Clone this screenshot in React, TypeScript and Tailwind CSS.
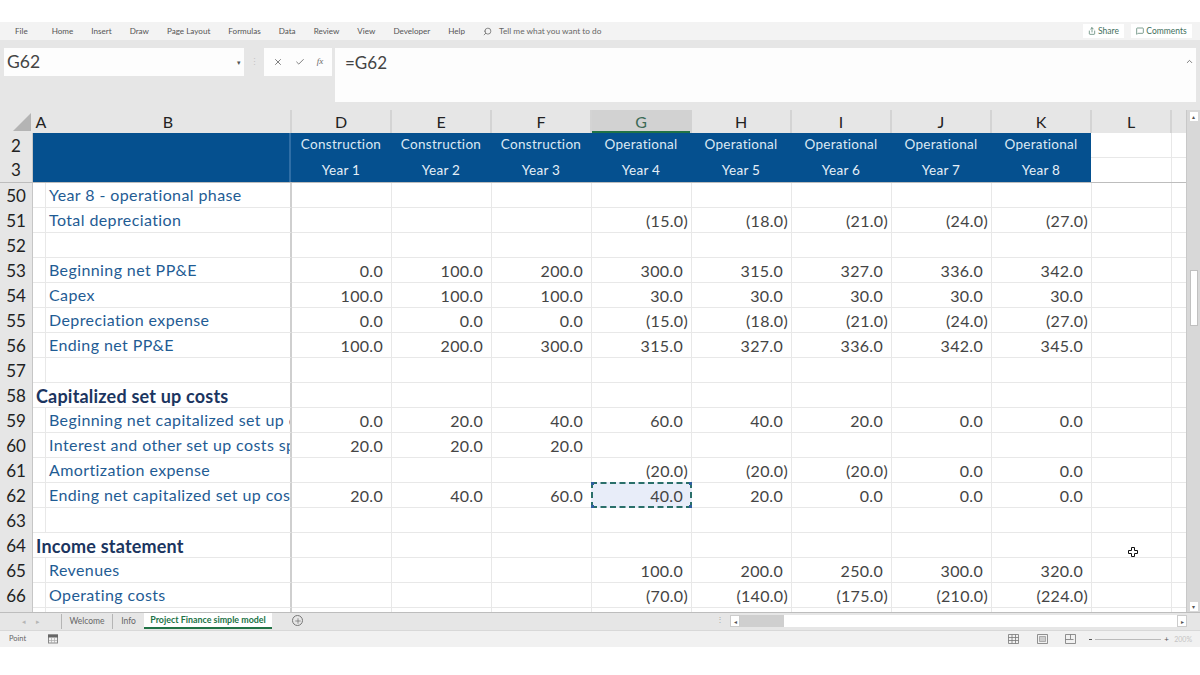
import React from "react";
import { Search, X, Check, MessageSquare, Share, ChevronUp, Plus } from "lucide-react";

type Row = { n: number; label?: string; head?: boolean; v?: string[] };

const e = "";
const rows: Row[] = [
  { n: 50, label: "Year 8 - operational phase" },
  { n: 51, label: "Total depreciation", v: [e, e, e, "(15.0)", "(18.0)", "(21.0)", "(24.0)", "(27.0)"] },
  { n: 52 },
  { n: 53, label: "Beginning net PP&E", v: ["0.0", "100.0", "200.0", "300.0", "315.0", "327.0", "336.0", "342.0"] },
  { n: 54, label: "Capex", v: ["100.0", "100.0", "100.0", "30.0", "30.0", "30.0", "30.0", "30.0"] },
  { n: 55, label: "Depreciation expense", v: ["0.0", "0.0", "0.0", "(15.0)", "(18.0)", "(21.0)", "(24.0)", "(27.0)"] },
  { n: 56, label: "Ending net PP&E", v: ["100.0", "200.0", "300.0", "315.0", "327.0", "336.0", "342.0", "345.0"] },
  { n: 57 },
  { n: 58, label: "Capitalized set up costs", head: true },
  { n: 59, label: "Beginning net capitalized set up costs", v: ["0.0", "20.0", "40.0", "60.0", "40.0", "20.0", "0.0", "0.0"] },
  { n: 60, label: "Interest and other set up costs spent", v: ["20.0", "20.0", "20.0", e, e, e, e, e] },
  { n: 61, label: "Amortization expense", v: [e, e, e, "(20.0)", "(20.0)", "(20.0)", "0.0", "0.0"] },
  { n: 62, label: "Ending net capitalized set up costs", v: ["20.0", "40.0", "60.0", "40.0", "20.0", "0.0", "0.0", "0.0"] },
  { n: 63 },
  { n: 64, label: "Income statement", head: true },
  { n: 65, label: "Revenues", v: [e, e, e, "100.0", "200.0", "250.0", "300.0", "320.0"] },
  { n: 66, label: "Operating costs", v: [e, e, e, "(70.0)", "(140.0)", "(175.0)", "(210.0)", "(224.0)"] },
];

const cols = ["D", "E", "F", "G", "H", "I", "J", "K"];
const line1 = ["Construction", "Construction", "Construction", "Operational", "Operational", "Operational", "Operational", "Operational"];

function ColHead({ t, w, active }: { t: string; w: string; active?: boolean }) {
  return (
    <div className={`${w} h-full flex items-center justify-center border-r-2 ${active ? "bg-[#d2d2d2] border-[#d2d2d2] text-[#3d6b57] shadow-[inset_0_-2px_0_#217346]" : "border-[#d4d4d4] text-[#222]"}`}>
      {t}
    </div>
  );
}

function RowNum({ t, h = "h-[25px]" }: { t?: number; h?: string }) {
  return (
    <div className={`w-[33px] ${h} shrink-0 bg-[#e6e6e6] border-r border-[#c6c6c6] flex items-center justify-center text-[#222] text-[17px]`}>
      {t}
    </div>
  );
}

function Cell({ value, sel }: { value: string; sel?: boolean }) {
  const paren = value.startsWith("(");
  if (sel) {
    return (
      <div className="w-[101px] h-[26px] -mt-px -ml-px shrink-0 relative flex items-center justify-end pr-[7px] pt-[2px] tracking-[0.3px] bg-[#e8edf9] border-2 border-dashed border-[#2a6f6a] text-[#444]">
        {value}
        <span className="absolute -left-[2px] -top-[2px] w-[3px] h-[3px] bg-[#2f5f9f]" />
        <span className="absolute -right-[2px] -top-[2px] w-[3px] h-[3px] bg-[#2f5f9f]" />
        <span className="absolute -left-[2px] -bottom-[2px] w-[3px] h-[3px] bg-[#2f5f9f]" />
        <span className="absolute -right-[2px] -bottom-[2px] w-[3px] h-[3px] bg-[#2f5f9f]" />
      </div>
    );
  }
  return (
    <div className={`w-[100px] h-[25px] shrink-0 flex items-center justify-end border-r border-b border-[#e8e8e8] text-[#444] pt-px tracking-[0.3px] ${paren ? "pr-[3px]" : "pr-[8px]"}`}>
      {value}
    </div>
  );
}

function Tail() {
  return (
    <>
      <div className="w-[80px] h-[25px] shrink-0 border-r border-b border-[#e8e8e8]" />
      <div className="w-[14px] h-[25px] shrink-0 border-b border-[#e8e8e8]" />
    </>
  );
}

function DataRow({ r }: { r: Row }) {
  return (
    <div className="flex h-[25px]">
      <RowNum t={r.n} />
      {r.head ? (
        <div className="w-[259px] h-[25px] shrink-0 pl-[3px] pt-[2px] flex items-center border-r-2 border-b border-r-[#cfcfcf] border-b-[#e8e8e8] font-bold text-[#1b3560] text-[18px] tracking-[0.2px] whitespace-nowrap">
          {r.label}
        </div>
      ) : (
        <>
          <div className="w-[13px] h-[25px] shrink-0 border-r border-b border-[#e8e8e8]" />
          <div className="w-[246px] h-[25px] shrink-0 pl-[3px] flex items-center border-r-2 border-b border-r-[#cfcfcf] border-b-[#e8e8e8] text-[#1f5c94] tracking-[0.4px] whitespace-nowrap overflow-hidden">
            {r.label}
          </div>
        </>
      )}
      {cols.map((c, i) => (
        <Cell key={c} value={r.v ? r.v[i] : ""} sel={r.n === 62 && c === "G"} />
      ))}
      <Tail />
    </div>
  );
}

const tabs = ["File", "Home", "Insert", "Draw", "Page Layout", "Formulas", "Data", "Review", "View", "Developer", "Help"];

export default function App() {
  return (
    <div className="relative w-[1200px] h-[675px] bg-white flex flex-col overflow-hidden text-[16px] font-['Lato','Liberation_Sans',sans-serif]">
      <div className="h-[22px] shrink-0 bg-white" />

      {/* ribbon tabs */}
      <div className="h-[18px] shrink-0 bg-[#f3f3f3] flex items-center pl-[15px] text-[8.1px] text-[#555] relative">
        <div className="flex gap-[18px]">
          {tabs.map((t, i) => (
            <span key={t} className={i === 0 ? "mr-[6px]" : ""}>{t}</span>
          ))}
        </div>
        <Search size={9} className="ml-[18px] text-[#666] -scale-x-100" />
        <span className="ml-[7px] text-[#666] text-[8.3px]">Tell me what you want to do</span>
        <div className="ml-auto flex gap-[7px] pr-[8px] text-[#3f6f5c] text-[8.5px]">
          <div className="w-[41px] h-[14px] bg-white flex items-center justify-center gap-[2px]">
            <Share size={8} />
            <span>Share</span>
          </div>
          <div className="w-[61px] h-[14px] bg-white flex items-center justify-center gap-[2px]">
            <MessageSquare size={8} />
            <span>Comments</span>
          </div>
        </div>
      </div>

      {/* formula area */}
      <div className="h-[70px] shrink-0 bg-[#e6e6e6] flex items-start pt-[8px] pl-[4px] pr-[4px]">
        <div className="w-[240px] h-[28px] bg-[#fdfdfd] flex items-center pl-[3px] pr-[3px] text-[17.5px] text-[#444]">
          <span>G62</span>
          <span className="ml-auto text-[7px] text-[#555]">▾</span>
        </div>
        <div className="w-[20px] h-[28px] flex items-center justify-center text-[#c4c4c4] text-[9px]">⋮</div>
        <div className="w-[68px] h-[28px] bg-[#fdfdfd] flex items-center justify-center gap-[12px] text-[#666]">
          <X size={10} />
          <Check size={10} />
          <span className="text-[9px] italic font-['Liberation_Serif',serif]">fx</span>
        </div>
        <div className="w-[3px]" />
        <div className="w-[861px] h-[54px] bg-[#fdfdfd] flex items-start pl-[10px] pt-[2px] pr-[2px] text-[17px] text-[#444] relative">
          <span>=G62</span>
          <ChevronUp size={9} className="ml-auto mt-[7px] text-[#555]" />
        </div>
      </div>

      {/* sheet */}
      <div className="h-[502px] shrink-0 flex bg-[#e6e6e6]">
        <div className="w-[1186px] shrink-0 overflow-hidden bg-white">
          <div className="flex h-[23px] bg-[#e6e6e6] text-[16px]">
            <div className="w-[33px] h-full relative shrink-0">
              <svg width="33" height="23" viewBox="0 0 33 23" className="block">
                <path d="M31 3 L31 21 L13 21 Z" fill="#b4b4b4" />
              </svg>
            </div>
            <div className="w-[13px] h-full flex items-center justify-center shrink-0 text-[#222] pl-[3px]">A</div>
            <ColHead t="B" w="w-[246px] shrink-0" />
            {cols.map((c) => (
              <ColHead key={c} t={c} w="w-[100px] shrink-0" active={c === "G"} />
            ))}
            <ColHead t="L" w="w-[80px] shrink-0" />
          </div>

          {/* frozen blue header */}
          <div className="flex h-[25px]">
            <RowNum t={2} />
            <div className="w-[258px] shrink-0 bg-[#05508f] border-r-2 border-[#2f6ea6]" />
            {line1.map((t, i) => (
              <div key={i} className="w-[100px] shrink-0 bg-[#05508f] text-[#dbe8f4] text-[13.5px] tracking-[0.28px] pb-[2px] flex items-center justify-center">{t}</div>
            ))}
            <div className="w-[81px] shrink-0 border-r border-b border-[#e8e8e8]" />
            <div className="w-[14px] shrink-0 border-b border-[#e8e8e8]" />
          </div>
          <div className="flex h-[25px] border-b border-[#bdbdbd]">
            <RowNum t={3} h="h-[24px]" />
            <div className="w-[258px] shrink-0 bg-[#05508f] border-r-2 border-[#2f6ea6]" />
            {cols.map((c, i) => (
              <div key={c} className="w-[100px] shrink-0 bg-[#05508f] text-[#e6eff7] text-[13.5px] tracking-[0.28px] flex items-center justify-center">Year {i + 1}</div>
            ))}
            <div className="w-[81px] shrink-0 border-r border-[#e8e8e8]" />
          </div>

          {rows.map((r) => (
            <DataRow key={r.n} r={r} />
          ))}

          <div className="flex h-[4px]">
            <RowNum h="h-[4px]" />
            <div className="w-[13px] h-full border-r border-[#e8e8e8]" />
            <div className="w-[246px] h-full border-r-2 border-[#cfcfcf]" />
            {cols.map((c) => (
              <div key={c} className="w-[100px] h-full border-r border-[#e8e8e8]" />
            ))}
            <div className="w-[80px] h-full border-r border-[#e8e8e8]" />
          </div>
        </div>

        {/* vertical scrollbar */}
        <div className="w-[14px] shrink-0 bg-[#d8d8d8] flex flex-col items-center pt-[2px] border-l border-[#c8c8c8]">
          <div className="w-[8px] h-[9px] bg-white flex items-center justify-center text-[6px] leading-none text-[#555]">▴</div>
          <div className="w-[8px] h-[56px] bg-white mt-[149px] border border-[#c0c0c0]" />
          <div className="mt-auto w-[8px] h-[9px] bg-white flex items-center justify-center text-[6px] leading-none text-[#555] mb-[1px]">▾</div>
        </div>
      </div>

      {/* tabs */}
      <div className="h-[18px] shrink-0 bg-[#e6e6e6] border-t border-[#bdbdbd] flex items-start text-[8.5px] text-[#666]">
        <div className="w-[62px] h-[15px] flex items-center justify-center gap-[10px] text-[#b5b5b5] text-[7px] border-r border-[#b5b5b5] mt-[1px]">
          <span>◂</span>
          <span>▸</span>
        </div>
        <div className="w-[51px] h-[15px] flex items-center justify-center border-r border-[#b5b5b5] mt-[1px]">Welcome</div>
        <div className="w-[31px] h-[15px] flex items-center justify-center mt-[1px]">Info</div>
        <div className="w-[128px] h-[16px] bg-white border-b-2 border-[#217346] flex items-center justify-center font-bold text-[#217346] text-[8.9px]">Project Finance simple model</div>
        <div className="ml-[20px] mt-[2px] w-[11px] h-[11px] rounded-full border border-[#777] flex items-center justify-center text-[#666]">
          <Plus size={8} />
        </div>
        <div className="ml-[413px] mt-[2px] text-[#aaa] text-[8px] leading-none">⋮</div>
        <div className="ml-[6px] mt-[2px] w-[457px] h-[12px] flex">
          <div className="w-[10px] h-full bg-white flex items-center justify-center text-[6px] text-[#555] border border-[#ccc]">◂</div>
          <div className="w-[44px] h-full bg-[#cfcfcf]" />
          <div className="flex-1 h-full bg-white" />
          <div className="w-[10px] h-full bg-white flex items-center justify-center text-[6px] text-[#555] border border-[#ccc]">▸</div>
        </div>
      </div>

      {/* status bar */}
      <div className="h-[17px] shrink-0 bg-[#f1f1f1] border-t border-[#d8d8d8] flex items-center text-[7.5px] text-[#666] pl-[9px] pr-[8px]">
        <span>Point</span>
        <svg width="10" height="10" viewBox="0 0 10 10" className="ml-[22px]">
          <rect x="0.5" y="1" width="9" height="8" fill="none" stroke="#888" />
          <rect x="0" y="0.5" width="10" height="3" fill="#666" />
          <path d="M3.5 4v5M6.5 4v5M1 6.5h8" stroke="#aaa" strokeWidth="0.7" />
        </svg>
        <svg width="11" height="10" viewBox="0 0 11 10" className="ml-[950px]">
          <path d="M.5.5h10v9H.5zM.5 3.5h10M.5 6.5h10M4 .5v9M7.5 .5v9" fill="none" stroke="#777" strokeWidth="0.8" />
        </svg>
        <svg width="11" height="10" viewBox="0 0 11 10" className="ml-[18px]">
          <path d="M.5.5h10v9H.5z" fill="none" stroke="#777" strokeWidth="0.8" />
          <path d="M2.5 2.5h6v5h-6z" fill="#ccc" stroke="#888" strokeWidth="0.6" />
        </svg>
        <svg width="11" height="10" viewBox="0 0 11 10" className="ml-[17px]">
          <path d="M.5.5h10v9H.5zM5.5.5v5H.5M5.5 5.5h3" fill="none" stroke="#777" strokeWidth="0.8" />
        </svg>
        <div className="ml-[13px] flex items-center">
          <span className="w-[3px] h-px bg-[#555]" />
          <div className="w-[66px] h-px bg-[#bbb] mx-[3px]" />
          <span className="text-[#555] text-[8px] leading-none">+</span>
        </div>
        <span className="ml-auto text-[#c4c4c4] text-[7px]">200%</span>
      </div>

      {/* Excel cross mouse cursor */}
      <svg width="10" height="10" viewBox="0 0 10 10" className="absolute left-[1128px] top-[547px]">
        <path d="M3.5.5h3v3h3v3h-3v3h-3v-3h-3v-3h3z" fill="#fff" stroke="#111" strokeWidth="1" />
      </svg>
    </div>
  );
}
